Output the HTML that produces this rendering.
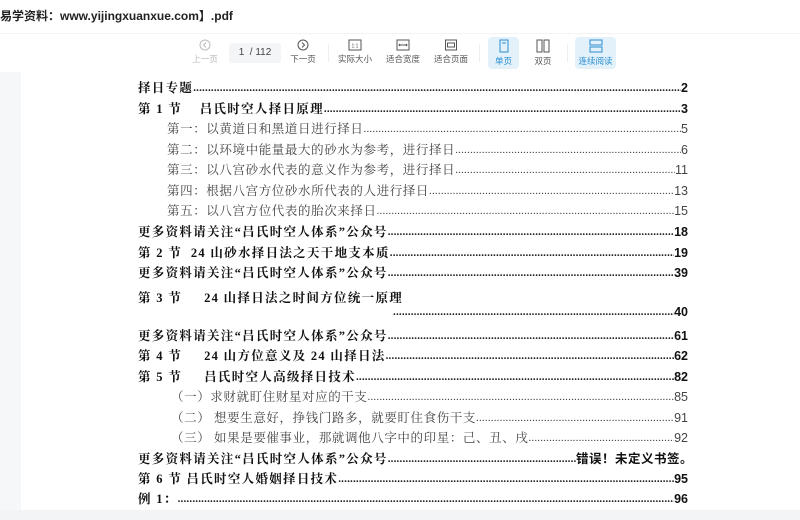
<!DOCTYPE html>
<html><head><meta charset="utf-8"><style>
*{margin:0;padding:0;box-sizing:border-box}
body{width:800px;height:520px;overflow:hidden;background:#fff;font-family:"Liberation Sans","Noto Sans CJK SC",sans-serif;position:relative}
.title{position:absolute;left:0;top:7px;font-size:12px;font-weight:bold;color:#222}
.tb{position:absolute;top:33px;left:0;width:800px;height:38px;background:#fff;border-top:1px solid #f3f3f3}
.btn{position:absolute;top:3px;text-align:center;font-size:8.5px;color:#555;width:50px}
.btn svg{display:block;margin:2px auto 2px}
.act{background:#e3f1fb;border-radius:4px;color:#2a8fd0;height:32px}
.sep{position:absolute;top:10px;width:1px;height:18px;background:#eee}
.left{position:absolute;left:0;top:72px;width:21px;height:438px;background:#f5f7f9}
.bottom{position:absolute;left:0;top:510px;width:800px;height:10px;background:#f3f4f6}
.row{position:absolute;left:138px;width:550px;display:flex;font-size:12.5px;line-height:16px;color:#111;font-family:"Liberation Serif","Noto Serif CJK SC",serif;white-space:nowrap}
.b{font-weight:bold;letter-spacing:1.3px}
.n{color:#444;letter-spacing:0.6px}
.d{flex:1;overflow:hidden;letter-spacing:0.2px;font-size:11px}
.b .d{font-weight:bold}
.d::before{content:"........................................................................................................................................................................................................................................................................"}
.p{font-family:"Liberation Sans",sans-serif;letter-spacing:0}
</style></head><body>
<div class="title">易学资料：www.yijingxuanxue.com】.pdf</div>
<div class="tb">
 <div class="btn" style="left:180px;color:#bbb"><svg width="12" height="12"><circle cx="6" cy="6" r="5" fill="none" stroke="#bbb"/><path d="M7 3.5L4.5 6L7 8.5" fill="none" stroke="#bbb"/></svg>上一页</div>
 <div style="position:absolute;left:229px;top:9px;width:52px;height:20px;background:#f4f5f7;border-radius:3px;font-size:10px;color:#444;text-align:center;line-height:20px">1 &nbsp;/ 112</div>
 <div class="btn" style="left:278px"><svg width="12" height="12"><circle cx="6" cy="6" r="5" fill="none" stroke="#555"/><path d="M5 3.5L7.5 6L5 8.5" fill="none" stroke="#555"/></svg>下一页</div>
 <div class="sep" style="left:328px"></div>
 <div class="btn" style="left:330px"><svg width="14" height="12"><rect x="1" y="1" width="12" height="10" fill="none" stroke="#555"/><text x="7" y="8.5" font-size="5" text-anchor="middle" fill="#555">1:1</text></svg>实际大小</div>
 <div class="btn" style="left:378px"><svg width="14" height="12"><rect x="1" y="1" width="12" height="10" fill="none" stroke="#555"/><path d="M3 6H11M4 5L3 6L4 7M10 5L11 6L10 7" fill="none" stroke="#555"/></svg>适合宽度</div>
 <div class="btn" style="left:426px"><svg width="14" height="12"><rect x="1.5" y="1" width="11" height="10" fill="none" stroke="#555"/><rect x="3.5" y="4" width="7" height="4" fill="none" stroke="#555"/></svg>适合页面</div>
 <div class="sep" style="left:479px"></div>
 <div class="btn act" style="left:488px;width:31px"><svg width="12" height="14"><rect x="2" y="1" width="8" height="12" fill="none" stroke="#2a8fd0"/><path d="M4 4H8" stroke="#2a8fd0"/></svg>单页</div>
 <div class="btn" style="left:526px;width:34px"><svg width="14" height="14"><rect x="1" y="1" width="5" height="12" fill="none" stroke="#555"/><rect x="8" y="1" width="5" height="12" fill="none" stroke="#555"/></svg>双页</div>
 <div class="sep" style="left:567px"></div>
 <div class="btn act" style="left:575px;width:41px"><svg width="14" height="14"><rect x="1" y="1" width="12" height="5" fill="none" stroke="#2a8fd0"/><rect x="1" y="8" width="12" height="5" fill="none" stroke="#2a8fd0"/></svg>连续阅读</div>
</div>
<div class="left"></div>
<div class="row b" style="top:80px"><span>择日专题</span><span class="d"></span><span class="p">2</span></div>
<div class="row b" style="top:101px"><span>第 1 节 &nbsp;&nbsp;&nbsp;吕氏时空人择日原理</span><span class="d"></span><span class="p">3</span></div>
<div class="row n" style="top:121px;left:167px;width:521px"><span>第一：以黄道日和黑道日进行择日</span><span class="d"></span><span class="p">5</span></div>
<div class="row n" style="top:142px;left:167px;width:521px"><span>第二：以环境中能量最大的砂水为参考，进行择日</span><span class="d"></span><span class="p">6</span></div>
<div class="row n" style="top:162px;left:167px;width:521px"><span>第三：以八宫砂水代表的意义作为参考，进行择日</span><span class="d"></span><span class="p">11</span></div>
<div class="row n" style="top:183px;left:167px;width:521px"><span>第四：根据八宫方位砂水所代表的人进行择日</span><span class="d"></span><span class="p">13</span></div>
<div class="row n" style="top:203px;left:167px;width:521px"><span>第五：以八宫方位代表的胎次来择日</span><span class="d"></span><span class="p">15</span></div>
<div class="row b" style="top:224px"><span>更多资料请关注“吕氏时空人体系”公众号</span><span class="d"></span><span class="p">18</span></div>
<div class="row b" style="top:245px"><span>第 2 节 &nbsp;24 山砂水择日法之天干地支本质</span><span class="d"></span><span class="p">19</span></div>
<div class="row b" style="top:265px"><span>更多资料请关注“吕氏时空人体系”公众号</span><span class="d"></span><span class="p">39</span></div>
<div class="row b" style="top:290px"><span>第 3 节 &nbsp;&nbsp;&nbsp;&nbsp;24 山择日法之时间方位统一原理</span></div>
<div class="row b" style="top:304px;left:393px;width:295px"><span class="d"></span><span class="p">40</span></div>
<div class="row b" style="top:328px"><span>更多资料请关注“吕氏时空人体系”公众号</span><span class="d"></span><span class="p">61</span></div>
<div class="row b" style="top:348px"><span>第 4 节 &nbsp;&nbsp;&nbsp;&nbsp;24 山方位意义及 24 山择日法</span><span class="d"></span><span class="p">62</span></div>
<div class="row b" style="top:369px"><span>第 5 节 &nbsp;&nbsp;&nbsp;&nbsp;吕氏时空人高级择日技术</span><span class="d"></span><span class="p">82</span></div>
<div class="row n" style="top:389px;left:171px;width:517px"><span>（一）求财就盯住财星对应的干支</span><span class="d"></span><span class="p">85</span></div>
<div class="row n" style="top:410px;left:171px;width:517px"><span>（二） 想要生意好，挣钱门路多，就要盯住食伤干支</span><span class="d"></span><span class="p">91</span></div>
<div class="row n" style="top:430px;left:171px;width:517px"><span>（三） 如果是要催事业，那就调他八字中的印星：己、丑、戌</span><span class="d"></span><span class="p">92</span></div>
<div class="row b" style="top:451px"><span>更多资料请关注“吕氏时空人体系”公众号</span><span class="d"></span><span style="font-family:'Liberation Sans','Noto Sans CJK SC',sans-serif;margin-right:-5px;letter-spacing:0.5px">错误！未定义书签。</span></div>
<div class="row b" style="top:471px"><span>第 6 节 吕氏时空人婚姻择日技术</span><span class="d"></span><span class="p">95</span></div>
<div class="row b" style="top:491px"><span>例 1：</span><span class="d"></span><span class="p">96</span></div>
<div class="bottom"></div>
</body></html>
